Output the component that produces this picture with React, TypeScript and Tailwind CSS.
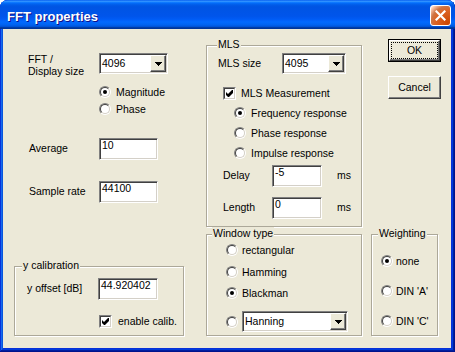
import React from "react";

const sunken =
  "bg-white border border-[#808080] border-r-white border-b-white shadow-[inset_1px_1px_0_#404040,inset_-1px_-1px_0_#d4d0c8]";
const raised =
  "bg-[#ece9d8] border border-white border-r-[#404040] border-b-[#404040] shadow-[inset_-1px_-1px_0_#808080]";

function Radio({ on }: { on?: boolean }) {
  return (
    <span className="flex w-[12px] h-[12px] shrink-0 rounded-full border border-[#808080] border-r-white border-b-white">
      <span className="flex flex-1 items-center justify-center rounded-full border border-[#404040] border-r-[#d4d0c8] border-b-[#d4d0c8] bg-white">
        {on && <span className="w-[4px] h-[4px] rounded-full bg-black" />}
      </span>
    </span>
  );
}

function Check({ on }: { on?: boolean }) {
  return (
    <span className="flex w-[13px] h-[13px] shrink-0 border border-[#808080] border-r-white border-b-white">
      <span className="flex flex-1 items-center justify-center border border-[#404040] border-r-[#d4d0c8] border-b-[#d4d0c8] bg-white">
        {on && (
          <svg width="7" height="7" viewBox="0 0 7 7">
            <path d="M0 2L2 4L6 0H7V3L3 7H2L0 5Z" fill="black" />
          </svg>
        )}
      </span>
    </span>
  );
}

function Edit({ value, className }: { value: string; className: string }) {
  return <div className={`${sunken} h-[22px] pl-[2px] pt-[1px] leading-[11px] ${className}`}>{value}</div>;
}

function Combo({ value, className }: { value: string; className: string }) {
  return (
    <div className={`${sunken} h-[21px] flex items-center ${className}`}>
      <span className="flex-1 pl-[2px] leading-[13px]">{value}</span>
      <span className={`${raised} w-[16px] h-[17px] mr-[1px] flex items-center justify-center`}>
        <svg width="7" height="4" viewBox="0 0 7 4">
          <path d="M0 0H7V1H6V2H5V3H4V4H3V3H2V2H1V1H0Z" fill="black" />
        </svg>
      </span>
    </div>
  );
}

function Group({
  label,
  labelPos,
  className,
  children,
}: {
  label: string;
  labelPos: string;
  className: string;
  children: React.ReactNode;
}) {
  return (
    <div className={`relative flex flex-col border border-[#aca899] shadow-[inset_1px_1px_0_#fff,1px_1px_0_#fff] ${className}`}>
      <span className={`absolute top-[-8px] px-[1px] leading-[13px] bg-[#ece9d8] ${labelPos}`}>{label}</span>
      {children}
    </div>
  );
}

function Opt({ on, text, className }: { on?: boolean; text: string; className: string }) {
  return (
    <div className={`flex items-center h-[12px] ${className}`}>
      <Radio on={on} />
      <span className="leading-[13px] whitespace-nowrap">{text}</span>
    </div>
  );
}

export default function App() {
  return (
    <div className="w-[455px] h-[352px] flex flex-col rounded-t-[8px] bg-[#0831d9] shadow-[inset_-1px_-1px_#00138c,inset_1px_1px_#0831d9,inset_-2px_-2px_#001ea0,inset_2px_2px_#166aee,inset_-3px_-3px_#003bda,inset_3px_3px_#0855dd] font-['Liberation_Sans',Arial,sans-serif] text-[10.5px] text-black">
      {/* title bar */}
      <div className="h-[29px] flex items-start pl-[7px] pr-[4px] rounded-t-[8px] bg-[linear-gradient(to_bottom,#0058ee_0%,#3593ff_4%,#288eff_6%,#127dff_8%,#036ffc_10%,#0262ee_14%,#0057e5_20%,#0054e3_24%,#0055eb_56%,#005bf5_66%,#026afe_76%,#0062ef_86%,#0052d6_92%,#0040ab_94%,#003092_100%)]">
        <span className="mt-[9px] leading-[15px] text-[13px] font-bold text-white [text-shadow:1px_1px_#0f1089]">
          FFT properties
        </span>
        <div className="ml-auto mt-[5px] w-[21px] h-[21px] rounded-[3px] border border-white flex items-center justify-center bg-[radial-gradient(circle_at_90%_90%,#cc4600_0%,#dc6527_55%,#cd7546_70%,#ffccb2_90%,#fff_100%)]">
          <svg width="11" height="11" viewBox="0 0 11 11">
            <path d="M1.5 1.5L9.5 9.5M9.5 1.5L1.5 9.5" stroke="white" strokeWidth="2.2" strokeLinecap="square" />
          </svg>
        </div>
      </div>

      {/* frame + client */}
      <div className="flex-1 flex pl-[3px] pr-[4px] pb-[4px]">
        <div className="flex-1 flex bg-[#ece9d8] pl-[11px] pr-[10px]">
          {/* left column */}
          <div className="flex flex-col w-[170px]">
            <div className="mt-[24px] flex h-[21px]">
              <div className="w-[85px] pl-[14px] leading-[12px]">
                FFT /
                <br />
                Display size
              </div>
              <Combo value="4096" className="w-[69px]" />
            </div>
            <Opt on text="Magnitude" className="mt-[12px] ml-[85px] gap-[5px]" />
            <Opt text="Phase" className="mt-[5px] ml-[85px] gap-[5px]" />
            <div className="mt-[23px] flex items-center">
              <span className="w-[85px] pl-[15px]">Average</span>
              <Edit value="10" className="w-[59px]" />
            </div>
            <div className="mt-[21px] flex items-center">
              <span className="w-[85px] pl-[15px]">Sample rate</span>
              <Edit value="44100" className="w-[59px]" />
            </div>
            <Group label="y calibration" labelPos="left-[7px]" className="mt-auto mb-[12px] h-[70px]">
              <div className="mt-[11px] flex items-center">
                <span className="w-[83px] pl-[12px]">y offset [dB]</span>
                <Edit value="44.920402" className="w-[60px]" />
              </div>
              <div className="mt-[15px] ml-[84px] flex items-center gap-[6px] h-[13px]">
                <Check on />
                <span className="leading-[13px]">enable calib.</span>
              </div>
            </Group>
          </div>

          {/* middle column */}
          <div className="flex flex-col w-[156px] ml-[22px]">
            <Group label="MLS" labelPos="left-[10px]" className="mt-[16px] h-[182px]">
              <div className="mt-[7px] flex items-center">
                <span className="w-[75px] pl-[11px]">MLS size</span>
                <Combo value="4095" className="w-[64px]" />
              </div>
              <div className="mt-[13px] ml-[16px] flex items-center gap-[5px] h-[13px]">
                <Check on />
                <span className="leading-[13px]">MLS Measurement</span>
              </div>
              <Opt on text="Frequency response" className="mt-[7px] ml-[27px] gap-[5px]" />
              <Opt text="Phase response" className="mt-[8px] ml-[27px] gap-[5px]" />
              <Opt text="Impulse response" className="mt-[8px] ml-[27px] gap-[5px]" />
              <div className="mt-[6px] flex items-center">
                <span className="w-[65px] pl-[16px]">Delay</span>
                <Edit value="-5" className="w-[50px]" />
                <span className="ml-[15px]">ms</span>
              </div>
              <div className="mt-[10px] flex items-center">
                <span className="w-[65px] pl-[16px]">Length</span>
                <Edit value="0" className="w-[50px]" />
                <span className="ml-[15px]">ms</span>
              </div>
            </Group>
            <Group label="Window type" labelPos="left-[5px]" className="mt-[7px] h-[102px]">
              <Opt text="rectangular" className="mt-[9px] ml-[19px] gap-[4px]" />
              <Opt text="Hamming" className="mt-[10px] ml-[19px] gap-[4px]" />
              <Opt on text="Blackman" className="mt-[9px] ml-[19px] gap-[4px]" />
              <div className="mt-[12px] ml-[19px] flex items-center gap-[4px]">
                <Radio />
                <Combo value="Hanning" className="w-[106px]" />
              </div>
            </Group>
          </div>

          {/* right column */}
          <div className="flex flex-col w-[71px] ml-[8px]">
            <div className="mt-[10px] self-end w-[53px] h-[23px] border border-black flex">
              <div className={`${raised} flex-1 flex p-[1px]`}>
                <div className="flex-1 border border-dotted border-black flex items-center justify-center leading-[13px]">
                  OK
                </div>
              </div>
            </div>
            <div className={`${raised} mt-[14px] self-end w-[53px] h-[23px] flex items-center justify-center leading-[13px]`}>
              Cancel
            </div>
            <Group label="Weighting" labelPos="left-[6px]" className="mt-auto mb-[12px] ml-[1px] w-[67px] h-[102px]">
              <Opt on text="none" className="mt-[20px] ml-[9px] gap-[3px]" />
              <Opt text="DIN 'A'" className="mt-[18px] ml-[9px] gap-[3px]" />
              <Opt text="DIN 'C'" className="mt-[18px] ml-[9px] gap-[3px]" />
            </Group>
          </div>
        </div>
      </div>
    </div>
  );
}
